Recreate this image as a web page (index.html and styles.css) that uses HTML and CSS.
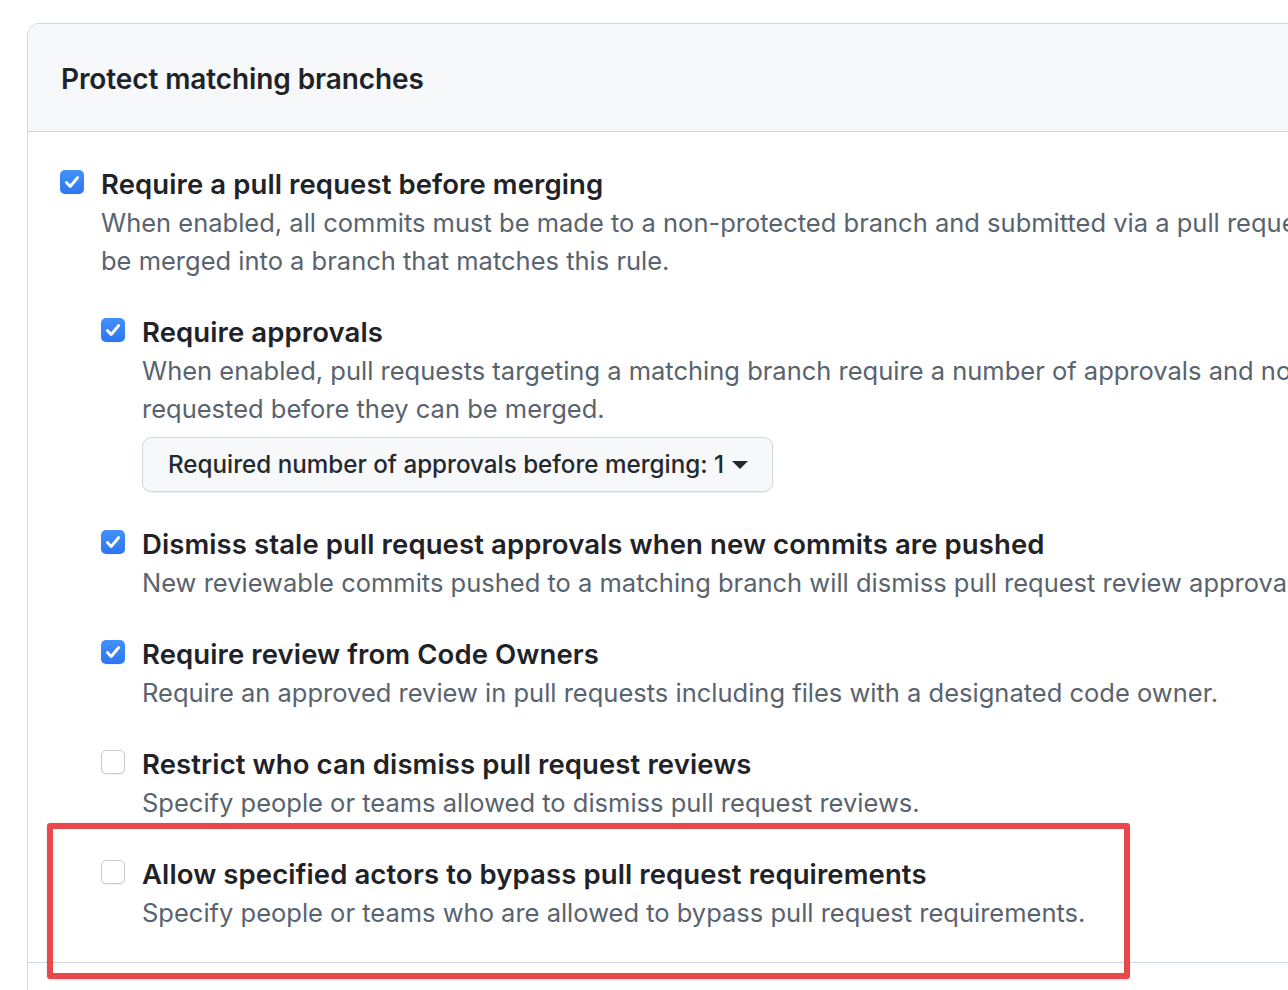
FILE: index.html
```html
<!DOCTYPE html>
<html lang="en">
<head>
<meta charset="utf-8">
<title>Protect matching branches</title>
<link rel="stylesheet" href="styles.css">
</head>
<body>
<div class="page">
  <section class="box">
    <header class="box-header">
      <h2 class="box-title">Protect matching branches</h2>
    </header>
    <div class="box-body">
      <div class="option">
        <span class="check checked"><svg viewBox="0 0 24 24" width="24" height="24"><path d="M6.4 12.5l3.8 4 7.5-9" fill="none" stroke="#fff" stroke-width="2.8" stroke-linecap="round" stroke-linejoin="round"/></svg></span>
        <div class="option-text">
          <div class="label">Require a pull request before merging</div>
          <p class="note">When enabled, all commits must be made to a non-protected branch and submitted via a pull request before they can<br>be merged into a branch that matches this rule.</p>

          <div class="option">
            <span class="check checked"><svg viewBox="0 0 24 24" width="24" height="24"><path d="M6.4 12.5l3.8 4 7.5-9" fill="none" stroke="#fff" stroke-width="2.8" stroke-linecap="round" stroke-linejoin="round"/></svg></span>
            <div class="option-text">
              <div class="label">Require approvals</div>
              <p class="note">When enabled, pull requests targeting a matching branch require a number of approvals and no changes<br>requested before they can be merged.</p>
              <button class="select-btn" type="button">Required number of approvals before merging: 1<span class="caret"></span></button>
            </div>
          </div>

          <div class="option">
            <span class="check checked"><svg viewBox="0 0 24 24" width="24" height="24"><path d="M6.4 12.5l3.8 4 7.5-9" fill="none" stroke="#fff" stroke-width="2.8" stroke-linecap="round" stroke-linejoin="round"/></svg></span>
            <div class="option-text">
              <div class="label">Dismiss stale pull request approvals when new commits are pushed</div>
              <p class="note">New reviewable commits pushed to a matching branch will dismiss pull request review approvals.</p>
            </div>
          </div>

          <div class="option">
            <span class="check checked"><svg viewBox="0 0 24 24" width="24" height="24"><path d="M6.4 12.5l3.8 4 7.5-9" fill="none" stroke="#fff" stroke-width="2.8" stroke-linecap="round" stroke-linejoin="round"/></svg></span>
            <div class="option-text">
              <div class="label">Require review from Code Owners</div>
              <p class="note">Require an approved review in pull requests including files with a designated code owner.</p>
            </div>
          </div>

          <div class="option">
            <span class="check"></span>
            <div class="option-text">
              <div class="label">Restrict who can dismiss pull request reviews</div>
              <p class="note">Specify people or teams allowed to dismiss pull request reviews.</p>
            </div>
          </div>

          <div class="option">
            <span class="check"></span>
            <div class="option-text">
              <div class="label">Allow specified actors to bypass pull request requirements</div>
              <p class="note">Specify people or teams who are allowed to bypass pull request requirements.</p>
            </div>
          </div>
        </div>
      </div>
    </div>
    <div class="box-rest"></div>
  </section>
  <div class="highlight"></div>
</div>
</body>
</html>
```

FILE: styles.css
```css
html, body {
  margin: 0;
  padding: 0;
  background: #ffffff;
  overflow: hidden;
}

body {
  font-family: Inter, "Noto Sans", "Liberation Sans", sans-serif;
  color: #1f2328;
  -webkit-font-smoothing: antialiased;
}

.page {
  position: relative;
  width: 1288px;
  height: 990px;
  overflow: hidden;
}

.box {
  margin: 23px -400px 0 27px;
  border: 1px solid #d0d7de;
  border-radius: 12px;
  height: 1100px;
  overflow: hidden;
}

.box-header {
  height: 107px;
  background: #f6f8fa;
  border-bottom: 1px solid #d0d7de;
  display: flex;
  align-items: center;
  padding-left: 33px;
}

.box-title {
  margin: 0;
  padding-top: 2px;
  font-size: 28px;
  font-weight: 600;
  letter-spacing: -0.1px;
}

.box-body {
  padding: 33px 0 30px 32px;
  border-bottom: 1px solid #d0d7de;
}

.option {
  display: flex;
  gap: 17px;
  margin-top: 33px;
}

.box-body > .option {
  margin-top: 0;
}

.option-text {
  flex: 1;
  min-width: 0;
}

.check {
  flex: 0 0 auto;
  width: 24px;
  height: 24px;
  margin-top: 5px;
  box-sizing: border-box;
  border-radius: 5px;
  border: 1px solid #cacaca;
  background: #ffffff;
  box-shadow: 0 1px 1px rgba(0, 0, 0, 0.06);
  display: flex;
  align-items: center;
  justify-content: center;
}

.check.checked {
  border: none;
  background: linear-gradient(#4391f9, #2c76f1);
}

.check svg {
  width: 24px;
  height: 24px;
}

.label {
  font-size: 27.5px;
  font-weight: 600;
  line-height: 39px;
  letter-spacing: 0.1px;
  white-space: nowrap;
}

.note {
  margin: 0;
  font-size: 25.5px;
  line-height: 38px;
  color: #59636e;
  white-space: nowrap;
}

.select-btn {
  display: flex;
  align-items: center;
  margin-top: 9px;
  width: 631px;
  height: 55px;
  padding: 0 0 0 25px;
  background: #f6f8fa;
  border: 1px solid #d0d7de;
  border-radius: 9px;
  box-shadow: 0 1px 0 rgba(31, 35, 40, 0.06);
  font-family: inherit;
  font-size: 24.2px;
  font-weight: 500;
  color: #24292f;
  cursor: pointer;
}

.caret {
  display: inline-block;
  margin-left: 8px;
  width: 0;
  height: 0;
  border-left: 8px solid transparent;
  border-right: 8px solid transparent;
  border-top: 8px solid #24292f;
}

.highlight {
  position: absolute;
  left: 47px;
  top: 823px;
  width: 1083px;
  height: 156px;
  box-sizing: border-box;
  border: 6px solid #e8484c;
  border-radius: 3px;
  box-shadow: 0 1px 3px rgba(0, 0, 0, 0.12);
}
```
